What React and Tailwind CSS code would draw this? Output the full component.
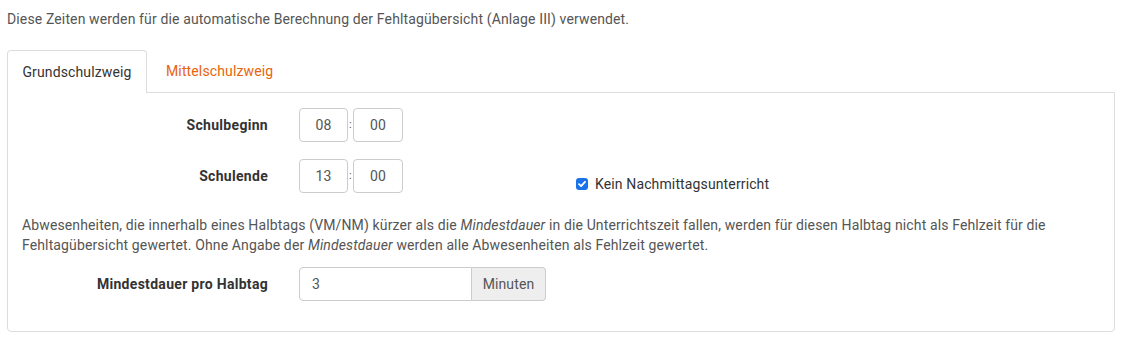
export default function App() {
  const font = { fontFamily: "Roboto, 'Liberation Sans', sans-serif" };
  return (
    <div className="bg-white w-[1124px] h-[341px] px-[7px] pt-[9px] text-[14px] leading-[20px] tracking-[0.13px] text-[#555]" style={font}>
      <p>Diese Zeiten werden für die automatische Berechnung der Fehltagübersicht (Anlage III) verwendet.</p>
      <div className="mt-[21px] flex w-[1108px]">
        <div className="h-[43px] w-[140px] border border-[#ddd] border-b-0 rounded-t-[4px] bg-white flex items-center justify-center text-[#333] relative z-10 -mb-px">
          Grundschulzweig
        </div>
        <div className="h-[42px] flex items-center pl-[19px] text-[#e8640c]">Mittelschulzweig</div>
      </div>
      <div className="w-[1108px] h-[240px] border border-[#ddd] rounded-b-[4px] pt-[15px]">
        <div className="flex items-center h-[34px]">
          <div className="w-[260px] text-right font-bold text-[#333] tracking-[0.3px]">Schulbeginn</div>
          <div className="ml-[31px] flex items-center">
            <div className="w-[49px] h-[34px] border border-[#ccc] rounded-[4px] flex items-center justify-center text-[#555]">08</div>
            <span className="w-[5px] text-center text-[#555] text-[11px]">:</span>
            <div className="w-[50px] h-[34px] border border-[#ccc] rounded-[4px] flex items-center justify-center text-[#555]">00</div>
          </div>
        </div>
        <div className="flex items-center h-[34px] mt-[17px]">
          <div className="w-[260px] text-right font-bold text-[#333] tracking-[0.3px]">Schulende</div>
          <div className="ml-[31px] flex items-center">
            <div className="w-[49px] h-[34px] border border-[#ccc] rounded-[4px] flex items-center justify-center text-[#555]">13</div>
            <span className="w-[5px] text-center text-[#555] text-[11px]">:</span>
            <div className="w-[50px] h-[34px] border border-[#ccc] rounded-[4px] flex items-center justify-center text-[#555]">00</div>
          </div>
          <div className="ml-[173px] self-end translate-y-[1px] flex items-center h-[20px] text-[#333]">
            <span className="w-[12px] h-[12px] rounded-[3px] bg-[#1a73e8] flex items-center justify-center">
              <svg width="10" height="10" viewBox="0 0 10 10">
                <path d="M2 5.2 L4.1 7.2 L8 2.8" fill="none" stroke="white" strokeWidth="1.8" strokeLinecap="round" strokeLinejoin="round" />
              </svg>
            </span>
            <span className="ml-[7px]">Kein Nachmittagsunterricht</span>
          </div>
        </div>
        <p className="mt-[22px] pl-[14px] pr-[14px]">
          Abwesenheiten, die innerhalb eines Halbtags (VM/NM) kürzer als die <em>Mindestdauer</em> in die Unterrichtszeit fallen, werden für diesen Halbtag nicht als Fehlzeit für die Fehltagübersicht gewertet. Ohne Angabe der <em>Mindestdauer</em> werden alle Abwesenheiten als Fehlzeit gewertet.
        </p>
        <div className="flex items-center h-[34px] mt-[12px]">
          <div className="w-[260px] text-right font-bold text-[#333] tracking-[0.3px]">Mindestdauer pro Halbtag</div>
          <div className="ml-[31px] flex h-[34px]">
            <div className="w-[173px] h-[34px] border border-[#ccc] rounded-l-[4px] flex items-center pl-[12px] text-[#555]">3</div>
            <div className="w-[74px] h-[34px] border border-l-0 border-[#ccc] rounded-r-[4px] bg-[#eee] flex items-center justify-center text-[#555]">Minuten</div>
          </div>
        </div>
      </div>
    </div>
  );
}
